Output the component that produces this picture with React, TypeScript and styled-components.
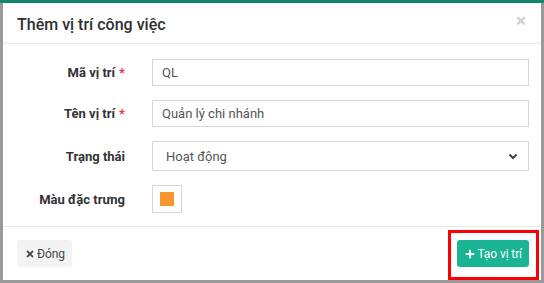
import React from 'react'
import styled, { createGlobalStyle } from 'styled-components'
import { FaPlus, FaTimes } from 'react-icons/fa'

const GlobalStyle = createGlobalStyle`
    html, body {
        margin: 0;
        padding: 0;
        background: #9a9a9a;
        font-family: Roboto, "Liberation Sans", sans-serif;
    }
    * {
        box-sizing: border-box;
    }
`

type Field = {
    label: string
    required?: boolean
    value: string
}

const fields: Field[] = [
    { label: 'Mã vị trí', required: true, value: 'QL' },
    { label: 'Tên vị trí', required: true, value: 'Quản lý chi nhánh' },
]

const App = () => {
    return (
        <Page>
            <GlobalStyle />
            <TopBar />
            <Modal>
                <Header>
                    <Title>Thêm vị trí công việc</Title>
                    <Close>×</Close>
                </Header>
                <Body>
                    {fields.map((f) => (
                        <Row key={f.label}>
                            <Label>
                                {f.label}
                                {f.required && <Star>*</Star>}
                            </Label>
                            <Input>{f.value}</Input>
                        </Row>
                    ))}
                    <Row>
                        <Label>Trạng thái</Label>
                        <Select>
                            Hoạt động
                            <svg width="10" height="7" viewBox="0 0 10 7">
                                <polyline points="1.5,1.5 5,5 8.5,1.5" fill="none" stroke="#444" strokeWidth="2" />
                            </svg>
                        </Select>
                    </Row>
                    <Row>
                        <Label>Màu đặc trưng</Label>
                        <Swatch>
                            <SwatchColor color="#f7962e" />
                        </Swatch>
                    </Row>
                </Body>
                <Footer>
                    <Button>
                        <FaTimes size={10} />
                        Đóng
                    </Button>
                    <Button primary>
                        <FaPlus size={10} />
                        Tạo vị trí
                    </Button>
                    <Highlight />
                </Footer>
            </Modal>
        </Page>
    )
}

const Page = styled.div`
    width: 544px;
    height: 283px;
    overflow: hidden;
`
const TopBar = styled.div`
    height: 3px;
    background: #14866d;
`
const Modal = styled.div`
    margin: 0 3px;
    height: 277px;
    background: #fff;
    display: flex;
    flex-direction: column;
`
const Header = styled.div`
    height: 41px;
    padding: 0 15px 0 14px;
    border-bottom: 1px solid #e9e9e9;
    display: flex;
    align-items: center;
    justify-content: space-between;
`
const Title = styled.div`
    font-size: 16px;
    font-weight: 500;
    color: #2f2f2f;
    padding-top: 2px;
`
const Close = styled.div`
    font-size: 19px;
    font-weight: 700;
    color: #cfcfcf;
    line-height: 1;
    margin-top: -6px;
`
const Body = styled.div`
    padding: 15px 12px 13px 0;
    display: flex;
    flex-direction: column;
    gap: 14px;
    border-bottom: 1px solid #e9e9e9;
`
const Row = styled.div`
    display: grid;
    grid-template-columns: 122px 1fr;
    column-gap: 27px;
    align-items: center;
`
const Label = styled.div`
    text-align: right;
    font-size: 13px;
    font-weight: 700;
    color: #333;
`
const Star = styled.span`
    color: #e53935;
    margin-left: 4px;
`
const Input = styled.div`
    height: 27px;
    border: 1px solid #d5d5dd;
    padding: 0 9px;
    font-size: 13px;
    color: #555;
    display: flex;
    align-items: center;
`
const Select = styled(Input)`
    height: 30px;
    padding: 0 10px 0 13px;
    justify-content: space-between;
`
const Swatch = styled.div`
    width: 30px;
    height: 28px;
    border: 1px solid #d5d5dd;
    display: flex;
    align-items: center;
    justify-content: center;
`
const SwatchColor = styled.div<{ color: string }>`
    width: 14px;
    height: 14px;
    background: ${(p) => p.color};
`
const Footer = styled.div`
    position: relative;
    flex: 1;
    padding: 0 12px 0 14px;
    display: flex;
    align-items: center;
    justify-content: space-between;
`
const Button = styled.div<{ primary?: boolean }>`
    height: 27px;
    padding: 0 7px 0 8px;
    display: flex;
    align-items: center;
    gap: 2px;
    font-size: 12px;
    letter-spacing: -0.1px;
    border-radius: 3px;
    background: ${(p) => (p.primary ? '#1ab394' : '#f3f3f3')};
    color: ${(p) => (p.primary ? '#fff' : '#444')};
`
const Highlight = styled.div`
    position: absolute;
    right: 2px;
    top: 3px;
    width: 91px;
    height: 50px;
    border: 3px solid #ff0000;
`

export default App
